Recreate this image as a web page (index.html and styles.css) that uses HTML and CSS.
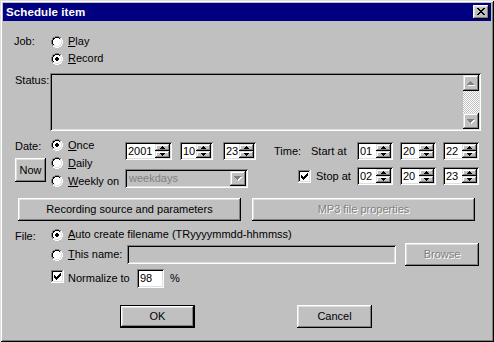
FILE: index.html
```html
<!DOCTYPE html>
<html lang="en">
<head>
<meta charset="utf-8">
<title>Schedule item</title>
<link rel="stylesheet" href="styles.css">
</head>
<body>
<svg class="defs" aria-hidden="true">
  <defs>
    <g id="radio" shape-rendering="crispEdges">
      <path fill="#808080" d="M4 0h4v1H4z M2 1h2v1H2z M8 1h2v1H8z M1 2h1v2H1z M0 4h1v4H0z M1 8h1v2H1z"/>
      <path fill="#fff" d="M10 2h1v2h-1z M11 4h1v4h-1z M10 8h1v2h-1z M2 10h2v1H2z M8 10h2v1H8z M4 11h4v1H4z"/>
      <path fill="#000" d="M4 1h4v1H4z M2 2h2v1H2z M8 2h1v1H8z M2 3h1v1H2z M1 4h1v4H1z M2 8h1v1H2z"/>
      <path fill="#dfdfdf" d="M9 2h1v1H9z M9 3h1v1H9z M10 4h1v4h-1z M9 8h1v1H9z M2 9h2v1H2z M8 9h2v1H8z M4 10h4v1H4z"/>
      <path fill="#fff" d="M4 2h4v1H4z M3 3h6v1H3z M2 4h8v4H2z M3 8h6v1H3z M4 9h4v1H4z"/>
    </g>
    <path id="dot" fill="#000" shape-rendering="crispEdges" d="M5 4h2v1H5z M4 5h4v2H4z M5 7h2v1H5z"/>
    <g id="check" shape-rendering="crispEdges">
      <path fill="#808080" d="M0 0h12v1H1v11H0z"/>
      <path fill="#fff" d="M12 0h1v13H0v-1h12z"/>
      <path fill="#000" d="M1 1h10v1H2v9H1z"/>
      <path fill="#dfdfdf" d="M11 1h1v11H1v-1h10z"/>
      <path fill="#fff" d="M2 2h9v9H2z"/>
      <path fill="#000" d="M9 3h1v1H9z M8 4h2v1H8z M3 5h1v1H3z M7 5h3v1H7z M3 6h2v1H3z M6 6h3v1H6z M3 7h5v1H3z M4 8h3v1H4z M5 9h1v1H5z"/>
    </g>
    <path id="xmark" fill="#000" shape-rendering="crispEdges" d="M0 0h2v1H0z M6 0h2v1H6z M1 1h2v1H1z M5 1h2v1H5z M2 2h4v1H2z M3 3h2v1H3z M2 4h4v1H2z M1 5h2v1H1z M5 5h2v1H5z M0 6h2v1H0z M6 6h2v1H6z"/>
    <path id="tri-up" shape-rendering="crispEdges" d="M3 0h1v1H3z M2 1h3v1H2z M1 2h5v1H1z M0 3h7v1H0z"/>
    <path id="tri-down" shape-rendering="crispEdges" d="M0 0h7v1H0z M1 1h5v1H1z M2 2h3v1H2z M3 3h1v1H3z"/>
    <path id="sm-up" fill="#000" shape-rendering="crispEdges" d="M2 0h1v1H2z M1 1h3v1H1z M0 2h5v1H0z"/>
    <path id="sm-down" fill="#000" shape-rendering="crispEdges" d="M0 0h5v1H0z M1 1h3v1H1z M2 2h1v1H2z"/>
  </defs>
</svg>

<div class="window">
  <div class="titlebar">
    <span class="title">Schedule item</span>
    <span class="close"><svg class="xicon" viewBox="0 0 8 7"><use href="#xmark"/></svg></span>
  </div>

  <div class="client">
    <div class="job">
      <span class="lbl">Job:</span>
      <div class="opts">
        <div class="opt"><svg class="radio" viewBox="0 0 12 12"><use href="#radio"/></svg><span><u>P</u>lay</span></div>
        <div class="opt"><svg class="radio" viewBox="0 0 12 12"><use href="#radio"/><use href="#dot"/></svg><span><u>R</u>ecord</span></div>
      </div>
    </div>

    <div class="status">
      <span class="lbl lbl-status">Status:</span>
      <div class="memo">
        <div class="vscroll">
          <span class="sbtn"><svg class="arrow" viewBox="0 0 8 5"><use href="#tri-up" fill="#fff" x="1" y="1"/><use href="#tri-up" fill="#808080"/></svg></span>
          <span class="track"></span>
          <span class="sbtn"><svg class="arrow" viewBox="0 0 8 5"><use href="#tri-down" fill="#fff" x="1" y="1"/><use href="#tri-down" fill="#808080"/></svg></span>
        </div>
      </div>
    </div>

    <div class="schedule">
      <div class="col-date">
        <span class="lbl lbl-date">Date:</span>
        <span class="btn btn-now">Now</span>
      </div>
      <div class="col-freq">
        <div class="opt frq"><svg class="radio" viewBox="0 0 12 12"><use href="#radio"/><use href="#dot"/></svg><span><u>O</u>nce</span></div>
        <div class="opt frq"><svg class="radio" viewBox="0 0 12 12"><use href="#radio"/></svg><span><u>D</u>aily</span></div>
        <div class="opt frq"><svg class="radio" viewBox="0 0 12 12"><use href="#radio"/></svg><span><u>W</u>eekly on</span></div>
      </div>
      <div class="col-day">
        <div class="spins spins-date">
          <div class="spin w-year"><span class="val">2001</span><span class="updown"><span class="ud"><svg class="sm" viewBox="0 0 5 3"><use href="#sm-up"/></svg></span><span class="ud"><svg class="sm" viewBox="0 0 5 3"><use href="#sm-down"/></svg></span></span></div>
          <div class="spin w-md"><span class="val">10</span><span class="updown"><span class="ud"><svg class="sm" viewBox="0 0 5 3"><use href="#sm-up"/></svg></span><span class="ud"><svg class="sm" viewBox="0 0 5 3"><use href="#sm-down"/></svg></span></span></div>
          <div class="spin w-md"><span class="val">23</span><span class="updown"><span class="ud"><svg class="sm" viewBox="0 0 5 3"><use href="#sm-up"/></svg></span><span class="ud"><svg class="sm" viewBox="0 0 5 3"><use href="#sm-down"/></svg></span></span></div>
        </div>
        <div class="combo">
          <span class="val">weekdays</span>
          <span class="drop"><svg class="arrow" viewBox="0 0 8 5"><use href="#tri-down" fill="#fff" x="1" y="1"/><use href="#tri-down" fill="#808080"/></svg></span>
        </div>
      </div>
      <div class="col-time">
        <div class="trow trow-start">
          <span class="t-time">Time:</span>
          <span class="t-start">Start at</span>
          <div class="spins spins-time">
            <div class="spin w-t"><span class="val">01</span><span class="updown"><span class="ud"><svg class="sm" viewBox="0 0 5 3"><use href="#sm-up"/></svg></span><span class="ud"><svg class="sm" viewBox="0 0 5 3"><use href="#sm-down"/></svg></span></span></div>
            <div class="spin w-t"><span class="val">20</span><span class="updown"><span class="ud"><svg class="sm" viewBox="0 0 5 3"><use href="#sm-up"/></svg></span><span class="ud"><svg class="sm" viewBox="0 0 5 3"><use href="#sm-down"/></svg></span></span></div>
            <div class="spin w-t"><span class="val">22</span><span class="updown"><span class="ud"><svg class="sm" viewBox="0 0 5 3"><use href="#sm-up"/></svg></span><span class="ud"><svg class="sm" viewBox="0 0 5 3"><use href="#sm-down"/></svg></span></span></div>
          </div>
        </div>
        <div class="trow trow-stop">
          <svg class="checkbox" viewBox="0 0 13 13"><use href="#check"/></svg>
          <span class="t-stop">Stop at</span>
          <div class="spins spins-time">
            <div class="spin w-t"><span class="val">02</span><span class="updown"><span class="ud"><svg class="sm" viewBox="0 0 5 3"><use href="#sm-up"/></svg></span><span class="ud"><svg class="sm" viewBox="0 0 5 3"><use href="#sm-down"/></svg></span></span></div>
            <div class="spin w-t"><span class="val">20</span><span class="updown"><span class="ud"><svg class="sm" viewBox="0 0 5 3"><use href="#sm-up"/></svg></span><span class="ud"><svg class="sm" viewBox="0 0 5 3"><use href="#sm-down"/></svg></span></span></div>
            <div class="spin w-t"><span class="val">23</span><span class="updown"><span class="ud"><svg class="sm" viewBox="0 0 5 3"><use href="#sm-up"/></svg></span><span class="ud"><svg class="sm" viewBox="0 0 5 3"><use href="#sm-down"/></svg></span></span></div>
          </div>
        </div>
      </div>
    </div>

    <div class="actions">
      <span class="btn btn-wide">Recording source and parameters</span>
      <span class="btn btn-wide disabled">MP3 file properties</span>
    </div>

    <div class="file">
      <div class="frow frow-auto">
        <span class="lbl lbl-file">File:</span>
        <div class="opt"><svg class="radio" viewBox="0 0 12 12"><use href="#radio"/><use href="#dot"/></svg><span><u>A</u>uto create filename (TRyyyymmdd-hhmmss)</span></div>
      </div>
      <div class="frow frow-name">
        <div class="opt opt-name"><svg class="radio" viewBox="0 0 12 12"><use href="#radio"/></svg><span><u>T</u>his name:</span></div>
        <div class="edit edit-name"></div>
        <span class="btn btn-browse disabled">Browse</span>
      </div>
      <div class="frow frow-norm">
        <div class="opt opt-norm"><svg class="checkbox" viewBox="0 0 13 13"><use href="#check"/></svg><span>Normalize to</span></div>
        <div class="edit edit-pct">98</div>
        <span class="pct">%</span>
      </div>
    </div>

    <div class="footer">
      <span class="btn btn-dlg btn-default">OK</span>
      <span class="btn btn-dlg btn-cancel">Cancel</span>
    </div>
  </div>
</div>
</body>
</html>
```

FILE: styles.css
```css
* { box-sizing: border-box; }
html, body { margin: 0; padding: 0; }
body {
  width: 494px; height: 342px; overflow: hidden;
  background: #c0c0c0;
  font-family: "Liberation Sans", Arial, sans-serif;
  font-size: 11px; line-height: 13px; color: #000;
}
.defs { position: absolute; width: 0; height: 0; overflow: hidden; }
svg { display: block; flex: none; }
u { text-decoration: underline; text-underline-offset: 1px; }

.window {
  width: 494px; height: 342px; padding: 3px;
  background: #c0c0c0;
  box-shadow: inset 1px 1px #dfdfdf, inset -1px -1px #000, inset 2px 2px #fff, inset -2px -2px #808080;
  display: flex; flex-direction: column;
}
.titlebar {
  height: 18px; flex: none;
  background: #000080; color: #fff;
  display: flex; align-items: center; justify-content: space-between;
  padding: 0 2px 0 3px;
}
.title { font-weight: bold; font-size: 11.5px; line-height: 14px; letter-spacing: 0.1px; }
.close {
  width: 16px; height: 14px; background: #c0c0c0;
  box-shadow: inset -1px -1px #000, inset 1px 1px #fff, inset -2px -2px #808080, inset 2px 2px #dfdfdf;
  display: flex; align-items: center; justify-content: center;
}
.xicon { width: 8px; height: 7px; margin: 0 1px 1px 0; }

/* raised / sunken */
.btn {
  display: flex; align-items: center; justify-content: center;
  background: #c0c0c0;
  box-shadow: inset -1px -1px #000, inset 1px 1px #fff, inset -2px -2px #808080, inset 2px 2px #dfdfdf;
}
.disabled { color: #808080; text-shadow: 1px 1px #fff; }

.client { padding-left: 12px; display: flex; flex-direction: column; }
.lbl { width: 36px; flex: none; }
.opt { display: flex; align-items: center; gap: 5px; height: 17px; white-space: nowrap; }
.radio { width: 12px; height: 12px; }
.checkbox { width: 13px; height: 13px; }

/* job */
.job { margin-top: 12px; display: flex; }
.job .lbl { line-height: 17px; margin-left: -1px; margin-right: 1px; }
.opts { display: flex; flex-direction: column; }

/* status */
.status { margin-top: 6px; display: flex; }
.lbl-status { width: 35px; padding-top: 1px; }
.memo {
  width: 431px; height: 58px; padding: 2px;
  background: #c0c0c0;
  box-shadow: inset 1px 1px #808080, inset -1px -1px #fff, inset 2px 2px #000, inset -2px -2px #dfdfdf;
  display: flex; justify-content: flex-end;
}
.vscroll { width: 16px; display: flex; flex-direction: column; }
.sbtn {
  height: 16px; flex: none;
  background: #c0c0c0;
  box-shadow: inset -1px -1px #000, inset 1px 1px #dfdfdf, inset -2px -2px #808080, inset 2px 2px #fff;
  display: flex; align-items: center; justify-content: center;
}
.arrow { width: 8px; height: 5px; }
.track {
  flex: 1;
  background: repeating-conic-gradient(#fff 0 25%, #c0c0c0 0 50%) 0 0 / 2px 2px;
}

/* schedule */
.schedule { margin-top: 5px; height: 55px; display: flex; flex: none; }
.col-date { width: 36px; display: flex; flex-direction: column; }
.lbl-date { line-height: 18px; padding-top: 1px; }
.btn-now { width: 31px; height: 24px; margin-top: 3px; }
.col-freq { width: 74px; display: flex; flex-direction: column; }
.frq { height: 18px; }
.col-day { width: 131px; display: flex; flex-direction: column; }
.spins { display: flex; }
.spins-date { margin-top: 6px; }
.spins-date .spin + .spin { margin-left: 8px; }
.spins-date .spin:last-child { margin-left: 10px; }
.spin {
  height: 18px; padding: 2px; display: flex;
  background: #fff;
  box-shadow: inset 1px 1px #808080, inset -1px -1px #fff, inset 2px 2px #000, inset -2px -2px #dfdfdf;
}
.w-year { width: 47px; }
.w-md { width: 33px; }
.w-t { width: 36px; }
.spin .val { flex: 1; line-height: 14px; padding-left: 1px; }
.updown { width: 15px; display: flex; flex-direction: column; flex: none; }
.ud {
  flex: 1; background: #c0c0c0;
  box-shadow: inset -1px -1px #000, inset 1px 1px #dfdfdf, inset -2px -2px #808080, inset 2px 2px #fff;
  display: flex; align-items: center; justify-content: center;
}
.sm { width: 5px; height: 3px; }
.combo {
  margin-top: 9px; width: 123px; height: 19px; padding: 2px;
  background: #c0c0c0;
  box-shadow: inset 1px 1px #808080, inset -1px -1px #fff, inset 2px 2px #000, inset -2px -2px #dfdfdf;
  display: flex;
}
.combo .val { flex: 1; color: #808080; line-height: 15px; padding-left: 2px; }
.drop {
  width: 16px; flex: none; background: #c0c0c0;
  box-shadow: inset -1px -1px #000, inset 1px 1px #dfdfdf, inset -2px -2px #808080, inset 2px 2px #fff;
  display: flex; align-items: center; justify-content: center;
}

.col-time { margin-left: 18px; display: flex; flex-direction: column; }
.trow { display: flex; align-items: center; height: 18px; }
.trow-start { margin-top: 6px; }
.trow-stop { margin-top: 7px; padding-left: 24px; }
.t-time { width: 37px; }
.t-start { width: 46px; }
.t-stop { width: 41px; margin-left: 5px; }
.spins-time { gap: 7px; }

/* action buttons */
.actions { margin-top: 7px; margin-left: 3px; display: flex; gap: 11px; }
.btn-wide { width: 223px; height: 23px; }

/* file */
.file { margin-top: 5px; display: flex; flex-direction: column; }
.frow { display: flex; align-items: center; }
.frow-auto { height: 17px; }
.lbl-file { padding-top: 3px; }
.frow-name { height: 23px; margin-left: 36px; }
.opt-name { width: 76px; }
.edit {
  height: 19px; padding: 2px 3px;
  box-shadow: inset 1px 1px #808080, inset -1px -1px #fff, inset 2px 2px #000, inset -2px -2px #dfdfdf;
  line-height: 15px;
}
.edit-name { width: 269px; background: #c0c0c0; }
.btn-browse { width: 74px; height: 23px; margin-left: 9px; }
.frow-norm { margin-top: 3px; height: 19px; margin-left: 36px; }
.opt-norm { width: 86px; gap: 4px; }
.opt-norm .checkbox { margin-bottom: 4px; }
.edit-pct { width: 27px; background: #fff; }
.pct { margin-left: 6px; }

/* footer */
.footer { margin-top: 17px; display: flex; }
.btn-dlg { width: 75px; height: 23px; }
.btn-default {
  margin-left: 105px;
  box-shadow: inset 0 0 0 1px #000, inset -2px -2px #000, inset 2px 2px #fff, inset -3px -3px #808080, inset 3px 3px #dfdfdf;
}
.btn-cancel { margin-left: 102px; }
```
